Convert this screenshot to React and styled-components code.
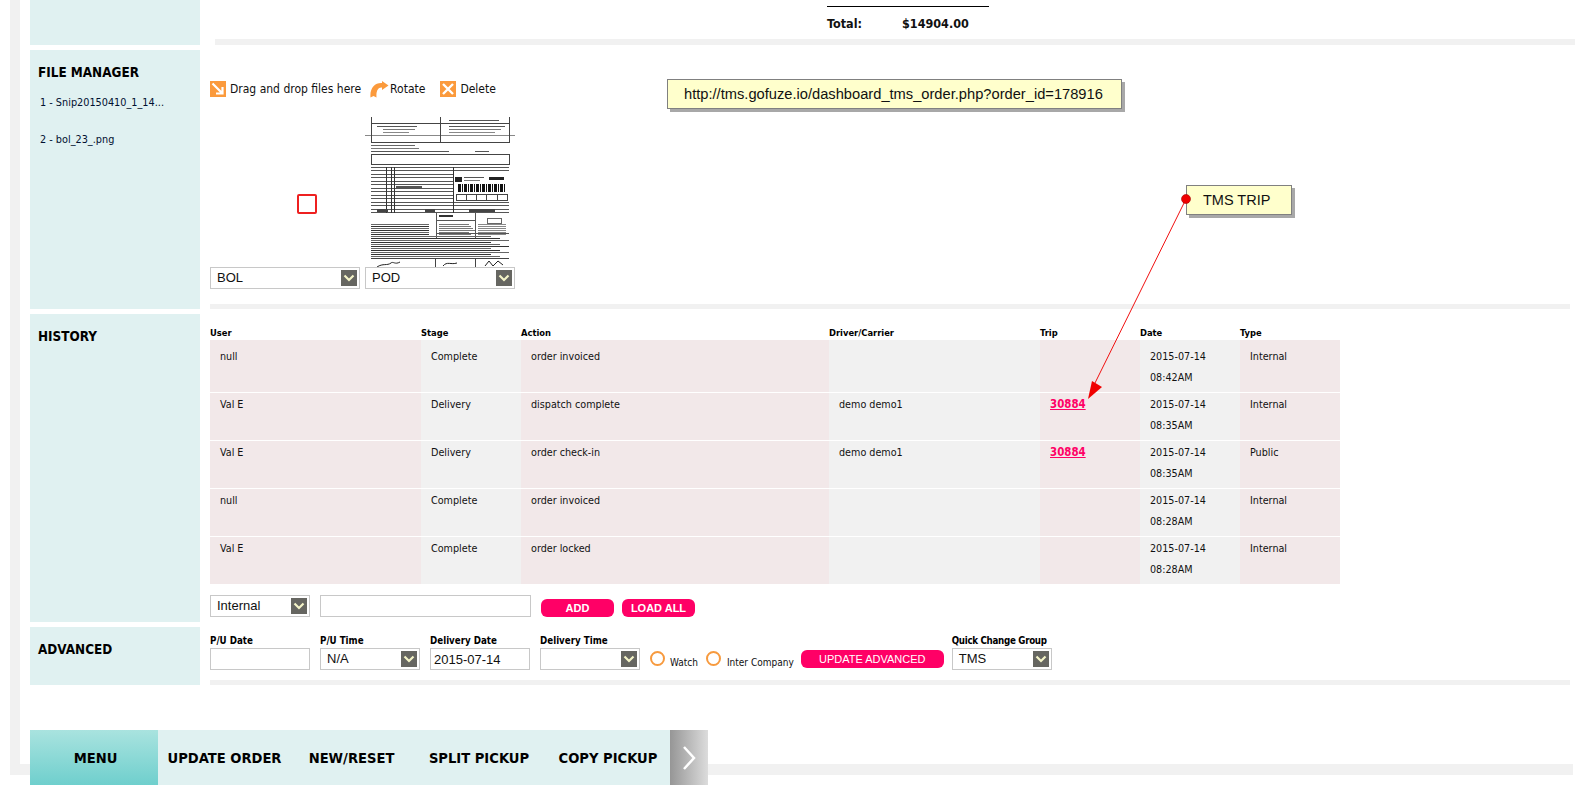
import React from 'react'
import styled, { createGlobalStyle } from 'styled-components'

const GlobalStyle = createGlobalStyle`
  html, body { margin: 0; padding: 0; background: #fff; overflow: hidden; }
  * { box-sizing: border-box; }
`

const tahoma = `"DejaVu Sans Condensed", "DejaVu Sans", sans-serif`
const arial = `"Liberation Sans", Arial, sans-serif`

const historyRows = [
  { user: 'null', stage: 'Complete', action: 'order invoiced', driver: '', trip: '', date: '2015-07-14', time: '08:42AM', type: 'Internal' },
  { user: 'Val E', stage: 'Delivery', action: 'dispatch complete', driver: 'demo demo1', trip: '30884', date: '2015-07-14', time: '08:35AM', type: 'Internal' },
  { user: 'Val E', stage: 'Delivery', action: 'order check-in', driver: 'demo demo1', trip: '30884', date: '2015-07-14', time: '08:35AM', type: 'Public' },
  { user: 'null', stage: 'Complete', action: 'order invoiced', driver: '', trip: '', date: '2015-07-14', time: '08:28AM', type: 'Internal' },
  { user: 'Val E', stage: 'Complete', action: 'order locked', driver: '', trip: '', date: '2015-07-14', time: '08:28AM', type: 'Internal' },
]

const Page = styled.div`
  position: relative;
  width: 1583px;
  height: 785px;
  overflow: hidden;
  background: #fff;
  font-family: ${tahoma};
  color: #111;
`

const Frame = styled.div`
  margin-left: 10px;
  width: 1563px;
  height: 775px;
  padding: 0 3px 0 10px;
  border-left: 10px solid #f1f1f1;
  border-bottom: 11px solid #f1f1f1;
  display: flex;
  flex-direction: column;
  gap: 5px;
`

const Section = styled.section`
  display: grid;
  grid-template-columns: 170px 1360px;
  column-gap: 10px;
  height: ${p => p.$h}px;
`

const Sidebar = styled.aside`
  background: #e0f1f1;
  padding: 15px 8px;
`

const SideTitle = styled.h3`
  margin: 0;
  font-size: 13.4px;
  line-height: 16px;
  font-weight: 700;
  color: #000;
`

const FileList = styled.div`
  margin-top: 14px;
  padding-left: 2px;
  display: flex;
  flex-direction: column;
  gap: 21px;
  font-size: 10.8px;
  line-height: 16px;
  color: #001030;
`

const Content = styled.div`
  display: flex;
  flex-direction: column;
  height: 100%;
`

const Spacer = styled.div`
  flex: 1;
`

const GrayBar = styled.div`
  height: ${p => (p.$shift ? 6 : 5)}px;
  background: #f1f1f1;
  margin: ${p => (p.$shift ? '0 -5px 0 5px' : '0')};
`

const TotalBlock = styled.div`
  margin: 6px 0 0 617px;
  width: 162px;
  border-top: 1px solid #000;
  padding-top: 9px;
  display: flex;
  font-size: 12.5px;
  line-height: 15px;
  font-weight: 700;
  color: #111;
`

const TotalLabel = styled.span`
  width: 75px;
`

const Toolbar = styled.div`
  margin-top: 31px;
  height: 16px;
  display: flex;
  align-items: center;
  font-size: 12px;
  line-height: 16px;
  color: #111;
`

const ToolText = styled.span`
  margin-left: ${p => p.$left}px;
`

const ToolIcon = styled.svg`
  display: block;
  flex: none;
  margin-left: ${p => p.$left || 0}px;
`

const DocRow = styled.div`
  margin-top: 20px;
  display: flex;
  gap: 5px;
`

const DocSlot = styled.div`
  width: 150px;
  display: flex;
  flex-direction: column;
`

const Preview = styled.div`
  height: 150px;
  display: flex;
  align-items: center;
  justify-content: center;
`

const EmptyMark = styled.div`
  width: 20px;
  height: 20px;
  margin: 24px 0 0 43px;
  border: 2px solid #ee2020;
  border-radius: 2px;
`

const ScanImage = styled.svg`
  display: block;
  filter: blur(0.4px);
`

const Dropdown = styled.div`
  width: ${p => p.$w || 100}px;
  height: 22px;
  flex: none;
  display: flex;
  align-items: center;
  justify-content: space-between;
  padding: 0 2px 0 6px;
  border: 1px solid #c8c8c8;
  background: #fff;
  font-family: ${arial};
  font-size: 13px;
  color: #111;
`

const SelectText = styled.span`
  margin-top: -2px;
`

const ArrowBox = styled.span`
  width: 16px;
  height: 16px;
  background: #666661;
  display: flex;
  align-items: center;
  justify-content: center;
`

const HeadRow = styled.div`
  display: grid;
  grid-template-columns: 211px 100px 308px 211px 100px 100px 100px;
  margin-top: 12px;
  height: 14px;
  font-size: 9.3px;
  line-height: 14px;
  font-weight: 700;
  color: #000;
`

const Row = styled.div`
  display: grid;
  grid-template-columns: 211px 100px 308px 211px 100px 100px 100px;
  height: ${p => (p.$first ? 53 : 48)}px;
  border-bottom: 1px solid #fff;
  font-size: 10.7px;
  line-height: 21px;
  color: #111;
`

const Cell = styled.div`
  padding: ${p => (p.$first ? 6 : 1)}px 10px 0;
  background: #f2e8e9;
  &:nth-child(even) { background: #f1f1f1; }
`

const TripLink = styled.a`
  color: #ff0066;
  font-size: 11.4px;
  font-weight: 700;
  text-decoration: underline;
`

const NoteForm = styled.div`
  margin-top: 10px;
  display: flex;
  align-items: center;
  gap: 10px;
`

const Field = styled.input`
  display: block;
  width: ${p => p.$w || 100}px;
  height: 22px;
  padding: 0 3px;
  flex: none;
  border: 1px solid #c8c8c8;
  border-radius: 0;
  outline: 0;
  background: #fff;
  font-family: ${arial};
  font-size: 13px;
  color: #111;
`

const PillButton = styled.button`
  width: ${p => p.$w}px;
  height: 18px;
  margin: ${p => p.$m || '4px 0 0'};
  padding: 0;
  flex: none;
  border: 0;
  border-radius: 6px;
  background: #ff0066;
  color: #fff;
  font-family: ${arial};
  font-size: 11px;
  font-weight: ${p => (p.$thin ? 400 : 700)};
`

const AdvancedRow = styled.div`
  display: flex;
  align-items: flex-end;
  height: 43px;
`

const FieldGroup = styled.div`
  width: 100px;
  margin-left: ${p => p.$ml || 0}px;
  margin-right: ${p => (p.$mr === undefined ? 10 : p.$mr)}px;
  display: flex;
  flex-direction: column;
`

const FieldLabel = styled.label`
  font-size: 9.7px;
  line-height: 14px;
  font-weight: 700;
  color: #000;
  white-space: nowrap;
  letter-spacing: ${p => (p.$tight ? '-0.3px' : '0')};
`

const Ring = styled.span`
  width: 15px;
  height: 15px;
  flex: none;
  margin: 0 0 4px ${p => p.$left}px;
  border: 2px solid #f79a3e;
  border-radius: 50%;
`

const RingLabel = styled.span`
  margin: 0 0 0 ${p => p.$left}px;
  font-size: 10px;
  line-height: 14px;
  white-space: nowrap;
  color: #111;
`

const MenuBar = styled.nav`
  position: absolute;
  left: 30px;
  bottom: 0;
  height: 55px;
  display: flex;
  align-items: stretch;
  background: #e0f1f1;
  font-size: 14.6px;
  font-weight: 700;
  color: #000;
`

const MenuHead = styled.div`
  width: 128px;
  padding-left: 3px;
  display: flex;
  align-items: center;
  justify-content: center;
  background: linear-gradient(#a9e3df, #6fcfcd);
`

const MenuItem = styled.div`
  width: ${p => p.$w}px;
  display: flex;
  align-items: center;
  justify-content: center;
  white-space: nowrap;
`

const MenuNext = styled.div`
  width: 38px;
  display: flex;
  align-items: center;
  justify-content: center;
  background: linear-gradient(90deg, #969696, #dcdcdc);
`

const Callout = styled.div`
  position: absolute;
  left: ${p => p.$x}px;
  top: ${p => p.$y}px;
  width: ${p => p.$w}px;
  height: ${p => p.$h}px;
  display: flex;
  align-items: center;
  padding-left: ${p => p.$pad}px;
  background: #ffffcc;
  border: 1px solid #808080;
  box-shadow: 3px 3px 0 #a8a8a8;
  font-family: ${arial};
  font-size: ${p => p.$size}px;
  color: #111;
  white-space: nowrap;
`

const PointerLayer = styled.svg`
  position: absolute;
  left: 0;
  top: 0;
  pointer-events: none;
`

const Chevron = () => (
  <svg width="12" height="8" viewBox="0 0 12 8">
    <path d="M1.5 1.5 L6 6 L10.5 1.5" fill="none" stroke="#f4f4c8" strokeWidth="2.2" />
  </svg>
)

const Select = ({ w, children }) => (
  <Dropdown $w={w}>
    <SelectText>{children}</SelectText>
    <ArrowBox><Chevron /></ArrowBox>
  </Dropdown>
)

const DropIcon = () => (
  <ToolIcon width="16" height="16" viewBox="0 0 16 16">
    <rect width="16" height="16" fill="#fb9a3c" />
    <path d="M2.5 2.5 L11.5 11.5 M12.5 6 V12.5 H6" fill="none" stroke="#fff" strokeWidth="2.2" />
  </ToolIcon>
)

const RotateIcon = () => (
  <ToolIcon $left={9} width="19" height="17" viewBox="0 0 19 17">
    <path d="M0.5 16.5 C-0.5 7 5 1.5 12 2 V0 L18.5 4.5 L12 9 V6.5 C8 6 6 10 6.5 16.5 L3.5 15 Z" fill="#fb9a3c" />
  </ToolIcon>
)

const DeleteIcon = () => (
  <ToolIcon $left={15} width="16" height="16" viewBox="0 0 16 16">
    <rect width="16" height="16" fill="#fb9a3c" />
    <path d="M3 3 L13 13 M13 3 L3 13" fill="none" stroke="#fff" strokeWidth="2.4" />
  </ToolIcon>
)

// scanned bill of lading, only the rough marks of the page
const tableRules = [50, 53, 57, 60, 64, 67, 71, 74, 78, 81, 85, 88, 92, 95]
const fineLines = [107, 109, 111, 113, 115, 117, 119, 121, 123, 125, 127, 129, 131, 133, 135, 137, 139]
const barcode = Array.from({ length: 24 }, (_, i) => 93 + i * 2)

const BolScan = () => (
  <ScanImage width="150" height="150" viewBox="0 0 150 150" shapeRendering="crispEdges">
    <path d="M0 18.5 H150" stroke="#888" fill="none" />
    <path d="M6.5 0 V25.5 H144.5 V0 M75.5 0 V25.5 M6 6.5 H144" stroke="#444" fill="none" />
    <rect x="12" y="9" width="40" height="1" fill="#555" />
    <rect x="18" y="12" width="32" height="1" fill="#777" />
    <rect x="18" y="15" width="26" height="1" fill="#888" />
    <rect x="84" y="3" width="50" height="1" fill="#555" />
    <rect x="84" y="9" width="56" height="1" fill="#555" />
    <rect x="84" y="12" width="52" height="1" fill="#777" />
    <rect x="84" y="15" width="46" height="1" fill="#888" />
    <rect x="6" y="28" width="44" height="1" fill="#666" />
    <rect x="6" y="31" width="48" height="1" fill="#777" />
    <rect x="6" y="34" width="78" height="1" fill="#555" />
    <rect x="110" y="34" width="14" height="1" fill="#555" />
    <path d="M6.5 37.5 H144.5 V47.5 H6.5 Z" stroke="#444" fill="none" />
    {tableRules.map(y => (
      <rect key={y} x="6" y={y} width="138" height="1" fill="#555" />
    ))}
    <path d="M21.5 50 V96 M26.5 50 V96 M29.5 50 V96 M88.5 50 V96" stroke="#333" fill="none" />
    <rect x="89" y="57" width="55" height="27" fill="#fff" />
    <rect x="90" y="60" width="7" height="5" fill="#222" />
    <rect x="99" y="60" width="20" height="1" fill="#555" />
    <rect x="99" y="63" width="16" height="1" fill="#777" />
    <rect x="124" y="60" width="15" height="3" fill="#222" />
    {barcode.map((x, i) => (
      <rect key={x} x={x} y="67" width={i % 3 === 0 ? 2 : 1} height="8" fill="#111" />
    ))}
    <path d="M91.5 77.5 H142.5 V83.5 H91.5 Z M101.5 77.5 V83.5 M111.5 77.5 V83.5 M121.5 77.5 V83.5 M132.5 77.5 V83.5" fill="none" stroke="#444" />
    <rect x="31" y="69" width="26" height="2" fill="#555" />
    <rect x="12" y="92" width="11" height="3" fill="#444" />
    <rect x="60" y="92" width="10" height="3" fill="#444" />
    <rect x="104" y="92" width="26" height="3" fill="#444" />
    <path d="M71.5 96 V122 M110.5 96 V122 M71 116.5 H144 M71 103.5 H110" fill="none" stroke="#555" />
    <rect x="74" y="98" width="14" height="2" fill="#333" />
    <rect x="122" y="101" width="14" height="5" fill="none" stroke="#666" />
    {fineLines.map((y, i) => (
      <g key={y}>
        <rect x="6" y={y} width={y < 118 ? 58 : 120 + (i % 3) * 9} height="1" fill={i % 2 ? '#333' : '#666'} />
        {y < 118 && <rect x="74" y={y} width={30 + (i % 4) * 2} height="1" fill="#777" />}
        {y < 118 && <rect x="113" y={y} width="28" height="1" fill="#888" />}
      </g>
    ))}
    <path d="M6 141.5 H144 M70.5 142 V150 M110.5 142 V150" fill="none" stroke="#444" />
    <path d="M12 150 C18 146 22 149 26 146 C28 144 30 148 35 145" fill="none" stroke="#222" shapeRendering="auto" />
    <path d="M78 149 C82 144 86 148 92 146 M120 149 L124 144 L128 149 L133 144 L138 148" fill="none" stroke="#222" shapeRendering="auto" />
  </ScanImage>
)

const App = () => {
  return (
    <Page>
      <GlobalStyle />
      <Frame>
        <Section $h={45}>
          <Sidebar />
          <Content>
            <TotalBlock>
              <TotalLabel>Total:</TotalLabel>
              <span>$14904.00</span>
            </TotalBlock>
            <Spacer />
            <GrayBar $shift />
          </Content>
        </Section>

        <Section $h={259}>
          <Sidebar>
            <SideTitle>FILE MANAGER</SideTitle>
            <FileList>
              <div>1 - Snip20150410_1_14...</div>
              <div>2 - bol_23_.png</div>
            </FileList>
          </Sidebar>
          <Content>
            <Toolbar>
              <DropIcon />
              <ToolText $left={4}>Drag and drop files here</ToolText>
              <RotateIcon />
              <ToolText $left={1}>Rotate</ToolText>
              <DeleteIcon />
              <ToolText $left={4}>Delete</ToolText>
            </Toolbar>
            <DocRow>
              <DocSlot>
                <Preview><EmptyMark /></Preview>
                <Select w={150}>BOL</Select>
              </DocSlot>
              <DocSlot>
                <Preview><BolScan /></Preview>
                <Select w={150}>POD</Select>
              </DocSlot>
            </DocRow>
            <Spacer />
            <GrayBar />
          </Content>
        </Section>

        <Section $h={308}>
          <Sidebar>
            <SideTitle>HISTORY</SideTitle>
          </Sidebar>
          <Content>
            <HeadRow>
              <div>User</div>
              <div>Stage</div>
              <div>Action</div>
              <div>Driver/Carrier</div>
              <div>Trip</div>
              <div>Date</div>
              <div>Type</div>
            </HeadRow>
            {historyRows.map((r, i) => (
              <Row key={i} $first={i === 0}>
                <Cell $first={i === 0}>{r.user}</Cell>
                <Cell $first={i === 0}>{r.stage}</Cell>
                <Cell $first={i === 0}>{r.action}</Cell>
                <Cell $first={i === 0}>{r.driver}</Cell>
                <Cell $first={i === 0}>{r.trip && <TripLink href="#">{r.trip}</TripLink>}</Cell>
                <Cell $first={i === 0}>{r.date}<br />{r.time}</Cell>
                <Cell $first={i === 0}>{r.type}</Cell>
              </Row>
            ))}
            <NoteForm>
              <Select w={100}>Internal</Select>
              <Field $w={211} />
              <PillButton $w={73}>ADD</PillButton>
              <PillButton $w={73} $m="4px 0 0 -2px">LOAD ALL</PillButton>
            </NoteForm>
          </Content>
        </Section>

        <Section $h={58}>
          <Sidebar>
            <SideTitle>ADVANCED</SideTitle>
          </Sidebar>
          <Content>
            <AdvancedRow>
              <FieldGroup>
                <FieldLabel>P/U Date</FieldLabel>
                <Field />
              </FieldGroup>
              <FieldGroup>
                <FieldLabel>P/U Time</FieldLabel>
                <Select>N/A</Select>
              </FieldGroup>
              <FieldGroup>
                <FieldLabel>Delivery Date</FieldLabel>
                <Field defaultValue="2015-07-14" />
              </FieldGroup>
              <FieldGroup $mr={0}>
                <FieldLabel>Delivery Time</FieldLabel>
                <Select />
              </FieldGroup>
              <Ring $left={10} />
              <RingLabel $left={5}>Watch</RingLabel>
              <Ring $left={8} />
              <RingLabel $left={6}>Inter Company</RingLabel>
              <PillButton $w={143} $thin $m="0 0 2px 7px">UPDATE ADVANCED</PillButton>
              <FieldGroup $mr={0} $ml={8}>
                <FieldLabel $tight>Quick Change Group</FieldLabel>
                <Select>TMS</Select>
              </FieldGroup>
            </AdvancedRow>
            <Spacer />
            <GrayBar />
          </Content>
        </Section>
      </Frame>

      <MenuBar>
        <MenuHead>MENU</MenuHead>
        <MenuItem $w={133}>UPDATE ORDER</MenuItem>
        <MenuItem $w={121}>NEW/RESET</MenuItem>
        <MenuItem $w={134}>SPLIT PICKUP</MenuItem>
        <MenuItem $w={124}>COPY PICKUP</MenuItem>
        <MenuNext>
          <svg width="14" height="24" viewBox="0 0 14 24">
            <path d="M2 1 L12 12 L2 23" fill="none" stroke="#fff" strokeWidth="2.5" />
          </svg>
        </MenuNext>
      </MenuBar>

      <PointerLayer width="1583" height="785" viewBox="0 0 1583 785">
        <path d="M1186 199 L1094 385" stroke="#f01010" strokeWidth="1" fill="none" />
        <path d="M1088 399 L1092 381 L1102 387 Z" fill="#f00000" />
      </PointerLayer>
      <Callout $x={667} $y={79} $w={455} $h={30} $pad={16} $size={14.68}>
        http://tms.gofuze.io/dashboard_tms_order.php?order_id=178916
      </Callout>
      <Callout $x={1186} $y={185} $w={106} $h={30} $pad={16} $size={14.5}>
        TMS TRIP
      </Callout>
      <PointerLayer width="1583" height="785" viewBox="0 0 1583 785">
        <circle cx="1186" cy="199" r="4.5" fill="#f00000" stroke="#a00000" strokeWidth="0.6" />
      </PointerLayer>
    </Page>
  )
}

export default App
